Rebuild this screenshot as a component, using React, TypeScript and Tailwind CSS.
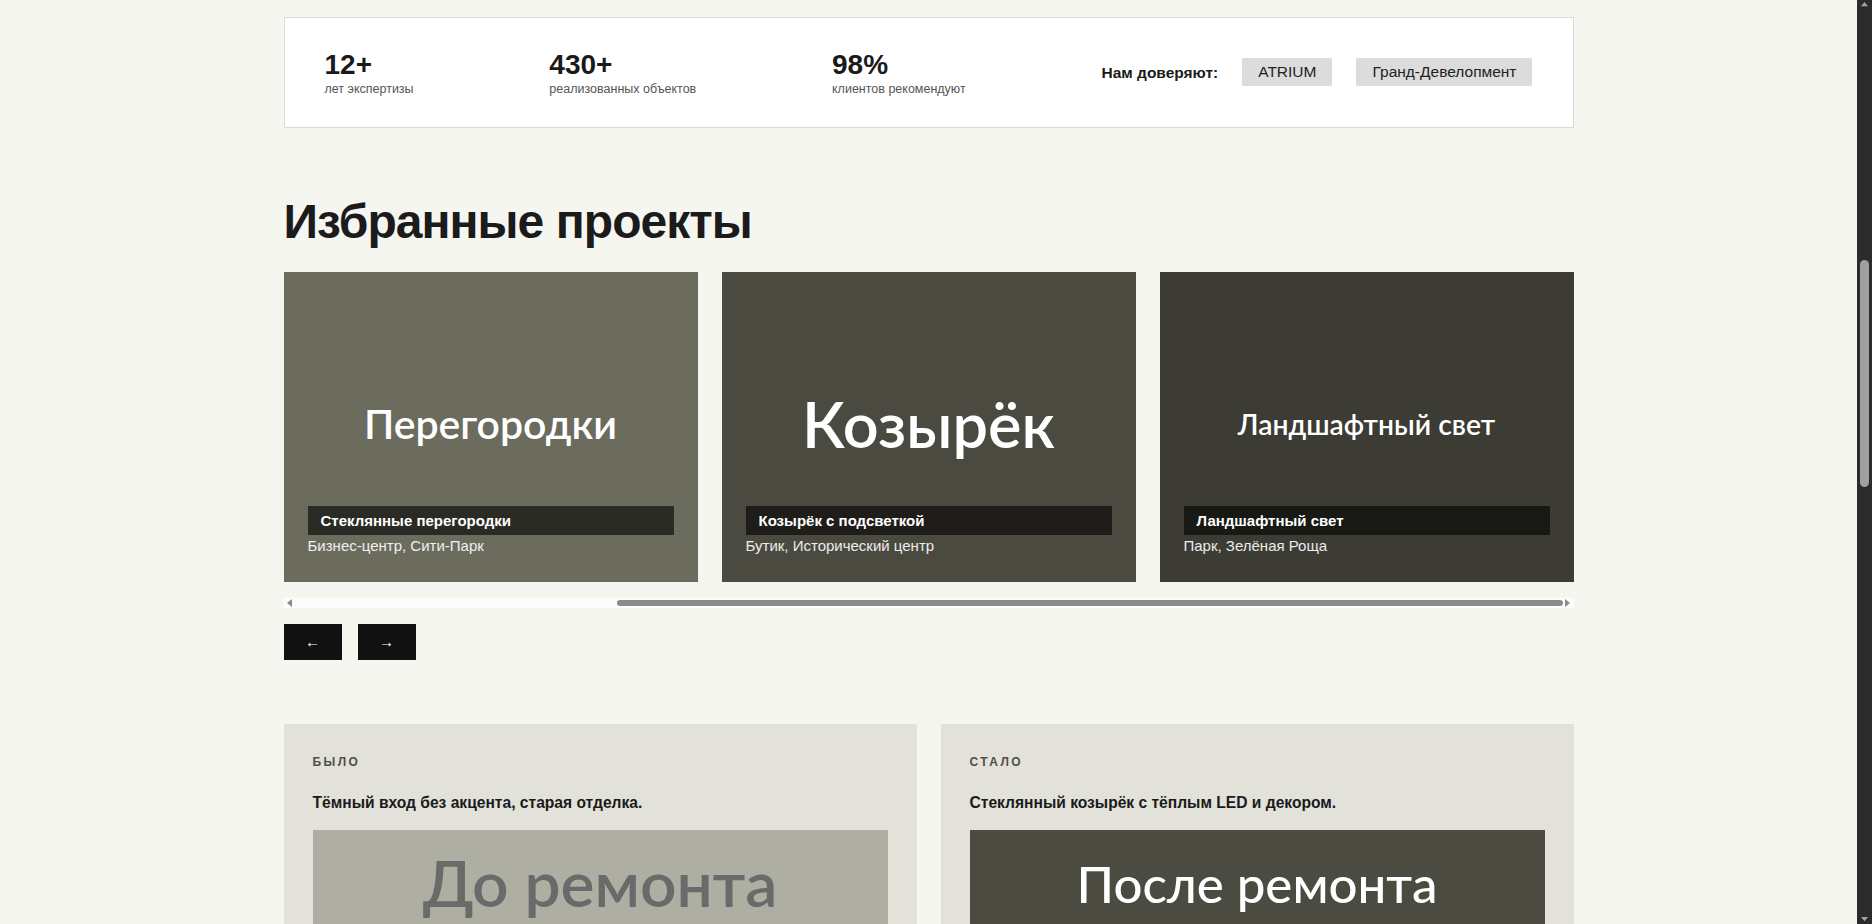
type Project = {
  label: string;
  labelSize: string;
  title: string;
  place: string;
  bg: string;
};

const PROJECTS: Project[] = [
  {
    label: "Перегородки",
    labelSize: "text-[41px]",
    title: "Стеклянные перегородки",
    place: "Бизнес-центр, Сити-Парк",
    bg: "bg-[#6b6b5e]",
  },
  {
    label: "Козырёк",
    labelSize: "text-[63px]",
    title: "Козырёк с подсветкой",
    place: "Бутик, Исторический центр",
    bg: "bg-[#4b4a40]",
  },
  {
    label: "Ландшафтный свет",
    labelSize: "text-[28.3px]",
    title: "Ландшафтный свет",
    place: "Парк, Зелёная Роща",
    bg: "bg-[#3c3c34]",
  },
];

const STATS = [
  { value: "12+", label: "лет экспертизы" },
  { value: "430+", label: "реализованных объектов" },
  { value: "98%", label: "клиентов рекомендуют" },
];

function ProjectCard({ project }: { project: Project }) {
  return (
    <div className={`relative h-[310px] w-[414px] shrink-0 ${project.bg}`}>
      <div className="flex h-full items-center justify-center pb-[6px]">
        <span
          className={`font-['Lato',sans-serif] font-semibold leading-none text-white ${project.labelSize}`}
        >
          {project.label}
        </span>
      </div>
      <div className="absolute bottom-6 left-6 right-6">
        <h3 className="bg-black/60 px-[13px] py-[5px] text-[15px] font-bold leading-[1.3] text-white">
          {project.title}
        </h3>
        <p className="text-[15px] leading-[1.5] text-white/90">{project.place}</p>
      </div>
    </div>
  );
}

function Arrow({ dir, className }: { dir: "up" | "down" | "left" | "right"; className: string }) {
  const pts = {
    up: "0,6 4,1 8,6",
    down: "0,1 4,6 8,1",
    left: "6,0 1,4 6,8",
    right: "1,0 6,4 1,8",
  }[dir];
  return (
    <svg viewBox="0 0 8 8" className={className}>
      <polygon points={pts} fill="currentColor" />
    </svg>
  );
}

// carousel scroll indicator, showing the track scrolled to its end
function CarouselScrollbar() {
  return (
    <div className="mt-4 flex h-[10px] items-center bg-[#fcfcfc] px-[2px]">
      <Arrow dir="left" className="h-2 w-2 text-[#8a8a8a]" />
      <div className="ml-[323px] h-[6px] w-[946px] rounded-full bg-[#8a8a8a]" />
      <Arrow dir="right" className="ml-auto h-2 w-2 text-[#8a8a8a]" />
    </div>
  );
}

function PageScrollbar() {
  return (
    <aside className="flex w-[15px] shrink-0 flex-col items-center bg-[#2b2b2b]">
      <Arrow dir="up" className="mt-px h-[7px] w-[9px] text-[#a3a3a3]" />
      <div className="mt-[252px] h-[227px] w-[9px] rounded-full bg-[#a0a0a0]" />
      <Arrow dir="down" className="mb-px mt-auto h-[7px] w-[9px] text-[#a3a3a3]" />
    </aside>
  );
}

export default function App() {
  return (
    <div className="flex h-screen overflow-hidden bg-[#f6f6f1] font-['Liberation_Sans',Arial,sans-serif] text-[#1b1b1b]">
      <main className="min-w-0 flex-1 overflow-hidden">
        <div className="mx-auto w-[1290px] pt-[17px] pb-24">
          {/* stats strip */}
          <section className="flex items-center justify-between border border-[#dcdcd4] bg-white px-10 py-[30px]">
            {STATS.map((s) => (
              <div key={s.value}>
                <div className="text-[28px] font-bold leading-[1.2] text-[#1a1a1a]">
                  {s.value}
                </div>
                <div className="text-[12.5px] leading-[1.2] text-[#555]">
                  {s.label}
                </div>
              </div>
            ))}
            <div className="flex items-center gap-6">
              <span className="text-[15.5px] font-bold text-[#1a1a1a]">
                Нам доверяют:
              </span>
              <span className="bg-[#dcdcdc] px-4 py-[5px] text-[15.5px] leading-[18px] text-[#222]">
                ATRIUM
              </span>
              <span className="bg-[#dcdcdc] px-4 py-[5px] text-[15.5px] leading-[18px] text-[#222]">
                Гранд-Девелопмент
              </span>
            </div>
          </section>

          {/* featured projects */}
          <section className="mt-[66px]">
            <h2 className="mb-[23px] text-[48px] font-bold leading-[1.15] tracking-[-0.02em] text-[#1b1b1b]">
              Избранные проекты
            </h2>
            <div className="flex gap-6">
              {PROJECTS.map((p) => (
                <ProjectCard key={p.label} project={p} />
              ))}
            </div>
            <CarouselScrollbar />
            <div className="mt-4 flex gap-4">
              <button className="flex h-9 w-[58px] items-center justify-center bg-[#111] text-[15px] text-white">
                ←
              </button>
              <button className="flex h-9 w-[58px] items-center justify-center bg-[#111] text-[15px] text-white">
                →
              </button>
            </div>
          </section>

          {/* before / after */}
          <section className="mt-16 grid grid-cols-2 gap-6">
            <div className="bg-[#e2e1da] p-[29px]">
              <div className="text-[12px] font-bold uppercase leading-[1.5] tracking-[0.2em] text-[#4f4f49]">
                Было
              </div>
              <p className="mt-5 text-[15.6px] font-semibold leading-[1.5] text-[#1a1a1a]">
                Тёмный вход без акцента, старая отделка.
              </p>
              <div className="mt-4 flex h-[106px] items-center justify-center bg-[#afaea2]">
                <span className="font-['Lato',sans-serif] text-[64px] font-semibold leading-none text-[#6a6a6a]">
                  До ремонта
                </span>
              </div>
            </div>
            <div className="bg-[#e2e1da] p-[29px]">
              <div className="text-[12px] font-bold uppercase leading-[1.5] tracking-[0.2em] text-[#4f4f49]">
                Стало
              </div>
              <p className="mt-5 text-[15.6px] font-semibold leading-[1.5] text-[#1a1a1a]">
                Стеклянный козырёк с тёплым LED и декором.
              </p>
              <div className="mt-4 flex h-[106px] items-center justify-center bg-[#4c4b41]">
                <span className="font-['Lato',sans-serif] text-[51px] font-medium leading-none text-white">
                  После ремонта
                </span>
              </div>
            </div>
          </section>
        </div>
      </main>
      <PageScrollbar />
    </div>
  );
}
